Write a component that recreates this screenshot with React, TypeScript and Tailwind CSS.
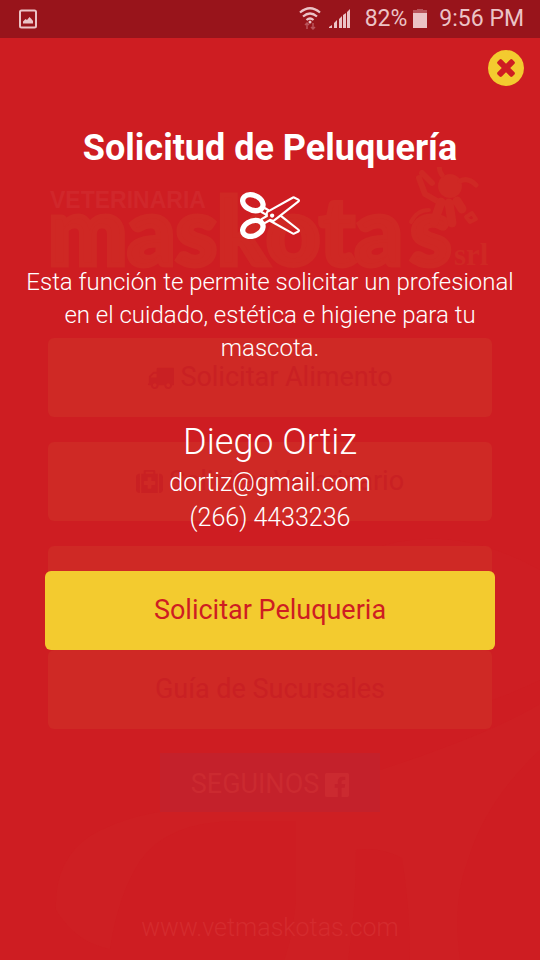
import type { ReactNode } from 'react'

type IconProps = {
    d: string
    viewBox?: string
    className?: string
}

const truck = 'M640 1408q0-52-38-90t-90-38-90 38-38 90 38 90 90 38 90-38 38-90zm-384-512h384v-256h-158q-13 0-22 9l-195 195q-9 9-9 22v30zm1280 512q0-52-38-90t-90-38-90 38-38 90 38 90 90 38 90-38 38-90zm256-1088v1024q0 15-4 26.5t-13.5 18.5-16.5 11.5-23.5 6-22.5 2-25.5 0-22.5-.5q0 106-75 181t-181 75-181-75-75-181h-384q0 106-75 181t-181 75-181-75-75-181h-64q-3 0-22.5.5t-25.5 0-22.5-2-23.5-6-16.5-11.5-13.5-18.5-4-26.5q0-26 19-45t45-19v-320q0-8-.5-35t0-38 2.5-34.5 6.5-37 14-30.5 22.5-30l198-198q19-19 50.5-32t58.5-13h160v-192q0-26 19-45t45-19h1024q26 0 45 19t19 45z'
const medkit = 'M1280 1088v-192q0-14-9-23t-23-9h-224v-224q0-14-9-23t-23-9h-192q-14 0-23 9t-9 23v224h-224q-14 0-23 9t-9 23v192q0 14 9 23t23 9h224v224q0 14 9 23t23 9h192q14 0 23-9t9-23v-224h224q14 0 23-9t9-23zm-640-704h512v-128h-512v128zm-384 0v1280h-32q-92 0-158-66t-66-158v-832q0-92 66-158t158-66h32zm1184 0v1280h-1088v-1280h160v-160q0-40 28-68t68-28h576q40 0 68 28t28 68v160h160zm352 224v832q0 92-66 158t-158 66h-32v-1280h32q92 0 158 66t66 158z'
const facebook = 'M1579 128q35 0 60 25t25 60v1366q0 35-25 60t-60 25h-391v-595h199l30-232h-229v-148q0-56 23.5-84t91.5-28l122-1v-207q-63-9-178-9-136 0-217.5 80t-81.5 226v171h-200v232h200v595h-735q-35 0-60-25t-25-60v-1366q0-35 25-60t60-25h1366z'
const closeCircle = 'M1277 1122q0-26-19-45l-181-181 181-181q19-19 19-45 0-27-19-46l-90-90q-19-18-46-18-26 0-45 18l-181 181-181-181q-19-18-45-18-27 0-46 18l-90 90q-19 19-19 46 0 26 19 45l181 181-181 181q-19 19-19 45 0 27 19 46l90 90q19 18 46 18 26 0 45-18l181-181 181 181q19 18 45 18 27 0 46-18l90-90q19-19 19-46zm387-226q0 209-103 385.5t-279.5 279.5-385.5 103-385.5-103-279.5-279.5-103-385.5 103-385.5 279.5-279.5 385.5-103 385.5 103 279.5 279.5 103 385.5z'
const scissors = 'M960 640q26 0 45 19t19 45-19 45-45 19-45-19-19-45 19-45 45-19zm300 64l507 398q28 20 25 56-5 35-35 51l-128 64q-13 7-29 7-17 0-31-8l-690-387-110 66q-8 4-12 5 14 49 10 97-7 77-56 147.5t-132 123.5q-132 84-277 84-136 0-222-78-90-84-79-207 7-76 56-147t131-124q132-84 278-84 83 0 151 31 9-13 22-22l122-73-122-73q-13-9-22-22-68 31-151 31-146 0-278-84-82-53-131-124t-56-147q-5-59 15.5-113t63.5-93q85-79 222-79 145 0 277 84 83 52 132 123t56 148q4 48-10 97 4 1 12 5l110 66 690-387q14-8 31-8 16 0 29 7l128 64q30 16 35 51 3 36-25 56zm-681-260q46-42 21-108t-106-117q-92-59-192-59-74 0-113 36-46 42-21 108t106 117q92 59 192 59 74 0 113-36zm-85 745q81-51 106-117t-21-108q-39-36-113-36-100 0-192 59-81 51-106 117t21 108q39 36 113 36 100 0 192-59zm178-613l96 58v-11q0-36 33-56l14-8-79-44-26 26q-3 3-10 11t-12 12q-2 2-4 3.5t-3 2.5zm224 224l96 32 736-576-128-64-768 431v113l-160 96 9 8q2 2 7 6 4 4 11 12t11 12l26 26zm704 416l128-64-520-408-177 138q-2 3-13 7z'

function Icon({ d, viewBox = '0 0 1792 1792', className }: IconProps) {
    return (
        <svg viewBox={viewBox} className={className} fill="currentColor" aria-hidden="true">
            <path d={d} />
        </svg>
    )
}

function StatusBar() {
    return (
        <div className="flex h-[38px] items-center bg-[#98141b] pr-4 pl-[18px] text-[23px] text-[#ebc3c6]">
            <svg viewBox="0 0 20 20" className="size-5" aria-hidden="true">
                <rect x="2" y="1.5" width="16" height="17" rx="1.5" fill="none" stroke="currentColor" strokeWidth="2" />
                <path d="M5 14.5v-2l2.5-2.5 1.5 1 2.5-3 1.5 1.5 2 2.5v2.5z" fill="currentColor" />
            </svg>
            <svg viewBox="0 0 22 24" className="ml-auto h-6 w-[22px]" fill="none" stroke="currentColor" strokeWidth="2.2" aria-hidden="true">
                <path d="M1 5.500q10-8.500 20 0M4 9.500q7-6 14 0M7.500 13q3.500-3 7 0" />
                <circle cx="11" cy="15" r="1.5" fill="currentColor" stroke="none" />
                <path d="M8 22v-6m-2 2l2-2 2 2M14 16v6m-2-2l2 2 2-2" stroke="#b9545b" strokeWidth="1.5" />
            </svg>
            <svg viewBox="0 0 22 20" className="ml-2 h-5 w-[22px]" fill="currentColor" aria-hidden="true">
                <path d="M0 19v-1l3-2v3zM5 19v-5l3-3v8zM10 19v-9l3-3v12zM14 19v-13l3-2v15zM18 19v-16l3-3v19z" />
            </svg>
            <span className="ml-3.5">82%</span>
            <svg viewBox="0 0 14 20" className="ml-1.5 h-5 w-3.5" aria-hidden="true">
                <path d="M0 1h4v-1h6v1h4v4h-14z" fill="#b9545b" />
                <path d="M0 4h14v15h-14z" fill="currentColor" />
            </svg>
            <span className="ml-3">9:56 PM</span>
        </div>
    )
}

function HomeCard({ children, label }: { children?: ReactNode; label?: string }) {
    return (
        <button
            type="button"
            aria-label={label}
            className="flex h-[79px] items-center justify-center gap-[6px] rounded-md bg-[#cf2925] text-[27px] text-[#c92023]"
        >
            {children}
        </button>
    )
}

function Logo() {
    return (
        <svg viewBox="0 0 444 132" className="w-full" fill="#cf2824" aria-hidden="true">
            <text x="2" y="41" fontFamily="Liberation Sans" fontWeight="700" fontSize="23" fill="#d0272b">VETERINARIA</text>
            <g fontFamily="Lato" fontWeight="900" fontSize="94" stroke="#cf2824" strokeWidth="5">
                <text x="0" y="98">maskota</text>
                <text x="362" y="98">s</text>
            </g>
            <text x="406" y="98" fontFamily="Liberation Serif" fontWeight="700" fontSize="31">srl</text>
            {/* perrito */}
            <g fill="none" stroke="#cf2824" strokeLinecap="round" strokeLinejoin="round">
                <circle cx="402" cy="19" r="12" fill="#cf2824" stroke="none" />
                <path d="M394 8q-4-6-2-10M412 14q8-4 16 4" strokeWidth="5" />
                <path d="M371 11l6 16 12 7M374 6l10 10" strokeWidth="6" />
                <path d="M393 35l-7 20M401 36l3 20M409 34l5 8" strokeWidth="9" />
                <path d="M363 55q6-12 18-12M418 50l6-4 4 6-6 3z" strokeWidth="4" />
            </g>
        </svg>
    )
}

// Marca de agua al pie de la pantalla
function Watermark() {
    return (
        <svg viewBox="0 0 540 430" className="absolute inset-x-0 bottom-0 w-full" fill="#ce1f23" aria-hidden="true">
            <path d="M56 380q-2-50 34-74 50-30 130-27l78 0v12h-60q-70 0-98 40-22 34-30 88-34-6-54-39z" />
            <path d="M296 260v110q-4 40-12 60h64q8-50 8-110 22-4 46 8 8 50 8 102h50q-8-60 8-100 18-60 72-110v-46q-50 30-160 66-40 14-84 20z" />
            <path d="M370 20q80-30 170 20v110q-60 30-150 46 60-80-20-176z" fill="#ce1e23" />
        </svg>
    )
}

function Home() {
    return (
        <div className="flex flex-1 flex-col px-12 pt-[129px]">
            <Logo />
            <div className="mt-[39px] flex flex-col gap-[25px]">
                <HomeCard>
                    <Icon d={truck} className="size-[27px]" />
                    Solicitar Alimento
                </HomeCard>
                <HomeCard>
                    <Icon d={medkit} className="size-[27px]" />
                    Solicitar Veterinario
                </HomeCard>
                <HomeCard label="Solicitar Peluqueria" />
                <HomeCard>Guía de Sucursales</HomeCard>
            </div>
            <button
                type="button"
                className="mt-6 flex h-[59px] w-[220px] items-center justify-center gap-1 self-center bg-[#c4212b] pt-1 pl-0.5 text-[27px] text-[#cb2a30]"
            >
                SEGUINOS
                <Icon d={facebook} className="size-7" />
            </button>
            <a href="#" className="mt-auto mb-4 self-center text-[25px] leading-[33px] font-light text-[#d42b2e]">
                www.vetmaskotas.com
            </a>
        </div>
    )
}

function RequestDialog() {
    return (
        <div role="dialog" aria-label="Solicitud de Peluquería" className="absolute inset-0 flex flex-col text-center text-white">
            <button type="button" aria-label="Cerrar" className="mt-3 mr-4 self-end text-[#f3cb2f]">
                <Icon d={closeCircle} viewBox="128 128 1536 1536" className="size-9" />
            </button>
            <h1 className="mt-10 text-4xl leading-[44px] font-bold">Solicitud de Peluquería</h1>
            <Icon d={scissors} viewBox="0 0 1792 1408" className="mt-[22px] w-[60px] self-center" />
            <p className="mt-[27px] px-6 text-2xl leading-[33px] font-light">
                Esta función te permite solicitar un profesional en el cuidado, estética e higiene para tu mascota.
            </p>
            <h2 className="mt-[55px] text-4xl leading-[44px] font-light">Diego Ortiz</h2>
            <p className="mt-px text-[25px] leading-[35px] font-light">dortiz@gmail.com</p>
            <p className="text-[25px] leading-[35px] font-light">(266) 4433236</p>
            <button type="button" className="mx-[45px] mt-9 h-[79px] rounded-md bg-[#f3cb2f] text-[27px] text-[#ce1d22]">
                Solicitar Peluqueria
            </button>
        </div>
    )
}

export default function App() {
    return (
        <div className="relative isolate flex min-h-screen flex-col bg-[#ce1d22] font-[Roboto,sans-serif]">
            <Watermark />
            <StatusBar />
            <main className="relative flex flex-1 flex-col">
                <Home />
                <RequestDialog />
            </main>
        </div>
    )
}
